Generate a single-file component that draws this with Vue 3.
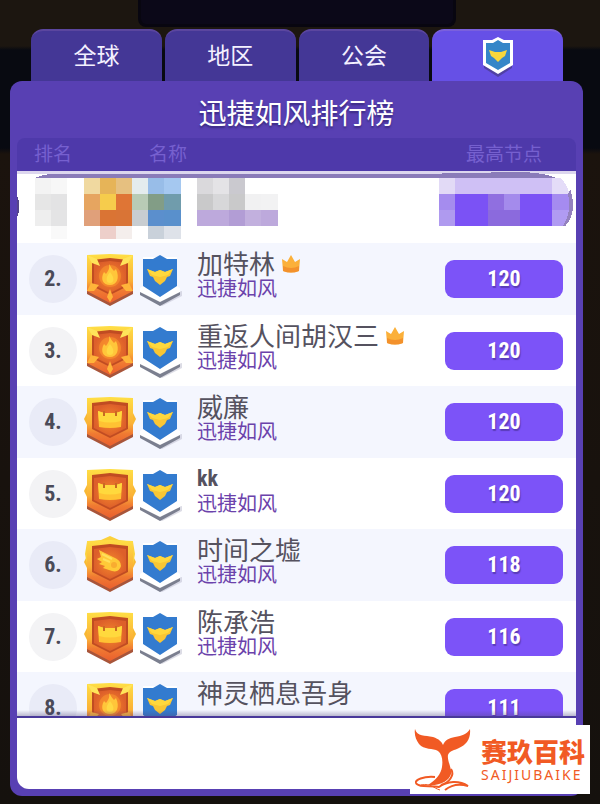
<template>
  <div class="game-page">
    <div class="back-panel"></div>
    <nav class="tabs">
      <button
        v-for="tab in tabs"
        :key="tab.key"
        type="button"
        class="tab-btn"
        :class="{ active: activeTab === tab.key }"
        :aria-label="tab.label"
        @click="activeTab = tab.key"
      >
        <span v-if="tab.key !== 'team'">{{ tab.label }}</span>
        <svg v-else viewBox="0 0 34 42" width="34" height="42">
          <path d="M3 29 V32 L17 41 L31 32 V29 L17 37 Z" fill="#4b3c92" opacity="0.8" />
          <path d="M2 4 H11 L17 1 L23 4 H32 V29 L17 38 L2 29 Z" fill="#ffffff" />
          <path d="M5 7 H12 L17 4 L22 7 H29 V27 L17 34 L5 27 Z" fill="#3586c8" />
          <path d="M8 14 L14 16 H20 L26 14 L24 20 L21 22 L17 26 L13 22 L10 20 Z" fill="#f8d63c" />
        </svg>
      </button>
    </nav>

    <main class="panel">
      <h1 class="panel-title">迅捷如风排行榜</h1>
      <div class="list">
        <table class="rank-table">
          <colgroup>
            <col class="col-rank" />
            <col class="col-badges" />
            <col />
            <col class="col-score" />
          </colgroup>
          <thead>
            <tr>
              <th class="head-rank">排名</th>
              <th></th>
              <th class="head-name"><span>名称</span></th>
              <th class="head-score">最高节点</th>
            </tr>
          </thead>
          <tbody>
            <tr class="hidden-row">
              <td colspan="4">
                <svg class="mosaic" viewBox="0 0 559 72" preserveAspectRatio="none">
                  <rect width="559" height="3" fill="#dcd6ee" />
                  <path d="M18 7 Q24 4 34 3 H400 L500 1 Q540 1 552 16 L540 7 Z" fill="#8a7bb9" />
                  <path d="M0 26 Q2 35 0 45" fill="none" stroke="#55468c" stroke-width="2" />
                  <rect
                    v-for="(block, i) in mosaic"
                    :key="i"
                    :x="block.x"
                    :y="block.y"
                    :width="block.w"
                    :height="block.h"
                    :fill="block.color"
                  />
                  <path d="M542 6 Q552 14 552 24 L555 22 Q558 42 547 55 L559 55 V6 Z" fill="#ffffff" />
                  <path d="M552 23 Q556 42 547 55 Q559 42 553 21 Z" fill="#9482be" stroke="#9482be" stroke-width="2" />
                </svg>
              </td>
            </tr>
            <tr v-for="player in players" :key="player.rank" class="player-row">
              <td>
                <span class="rank">{{ player.rank }}.</span>
              </td>
              <td>
                <div class="badges">
                  <svg viewBox="0 0 52 54" width="52" height="54">
                    <g v-if="player.badge !== 'flame'">
                      <path d="M4 16 L0 24 L4 32 Z M48 16 L52 24 L48 32 Z" fill="#f8b833" />
                      <path v-if="player.badge === 'wing'" d="M3 4 L17 2 L26 -2 L35 2 L49 4 L51 16 L48 32 L4 32 L1 16 Z" fill="#fbd13c" />
                    </g>
                    <path d="M3 38 L26 49 L49 38 V42 L26 54 L3 42 Z" fill="#a8553a" />
                    <path d="M3 3 L26 2 L49 3 V39 L26 51 L3 39 Z" fill="url(#frame)" />
                    <path d="M8 8 L26 6 L44 8 V34 L26 43 L8 34 Z" fill="#c04c22" />
                    <path d="M10 11 L26 9 L42 11 V33 L26 41 L10 33 Z" fill="url(#core)" />
                    <template v-if="player.badge === 'flame'">
                      <path d="M3 3 L13 7 L16 14 L8 11 Z M49 3 L39 7 L36 14 L44 11 Z" fill="#ffe45a" />
                      <path d="M3 39 L7 31 L15 33 L10 39 Z M49 39 L45 31 L37 33 L42 39 Z M26 37 L29 45 L26 50 L23 45 Z" fill="#ffb43a" />
                      <circle cx="26" cy="24" r="11" fill="#ff9b2d" opacity="0.5" />
                      <path d="M25 12 C27 15 28 17 30 19 L32 17 C36 26 33 33 26 33 C19 33 16 27 20 20 L22 22 C24 19 26 17 25 12 Z" fill="#ffc63a" />
                      <path d="M26 20 C31 26 30 31 26 31 C22 31 21 26 26 20 Z" fill="#ffd944" />
                    </template>
                    <template v-else-if="player.badge === 'crown'">
                      <path d="M14 16 L20 18 H32 L38 16 L37 32 Q26 34 15 32 Z" fill="#ffc233" />
                      <path d="M14 16 L20 18 H32 L38 16 L37 26 Q26 29 15 26 Z" fill="#ffd93d" />
                      <path d="M20 16 V21 M32 16 V21" stroke="#c86a22" stroke-width="2" />
                    </template>
                    <template v-else>
                      <path d="M15 12 L29 19 Q37 22 37 28 Q35 35 28 33 L19 30 L21 28 L15 26 L18 24 L13 21 L17 19 Z" fill="#ffc938" />
                      <path d="M18 16 L28 21 M19 21 L26 24" stroke="#ffe05c" stroke-width="2" />
                      <circle cx="30" cy="27" r="3" fill="#f9ac30" />
                    </template>
                  </svg>
                  <svg viewBox="0 0 44 54" width="44" height="54">
                    <path d="M10 47 L23 54 L43 44 V39 Z" fill="#b9bacb" opacity="0.5" />
                    <path d="M1 39 V43 L21 54 L41 43 V39 L21 48 Z" fill="#7b7f8f" />
                    <path d="M1 36 L4 34 V5 H38 V34 L41 36 V40 L21 50 L1 40 Z" fill="#ffffff" />
                    <path d="M4 7 H14 L21 3 L28 7 H38 V34 L21 45 L4 34 Z" fill="#337bcf" />
                    <path d="M8 17 L16 20 L21 18 L26 20 L34 17 L31 24 L28 25 L26 29 L21 33 L16 29 L14 25 L11 24 Z" fill="#f9c634" />
                    <path d="M8 17 L16 20 L21 18 L26 20 L34 17 L29 23 L21 25 L13 23 Z" fill="#ffd83d" />
                  </svg>
                </div>
              </td>
              <td>
                <div class="player">
                  <div class="player-name">
                    <span :class="{ latin: player.latin }">{{ player.name }}</span>
                    <svg v-if="player.vip" viewBox="0 0 20 20" width="20" height="20">
                      <path d="M1 5 L6 8 L10 1 L14 8 L19 5 L18 17 Q10 20 2 17 Z" fill="#fbb03a" />
                      <path d="M2 12 Q10 16 18 12 L18 17 Q10 20 2 17 Z" fill="#f3912c" />
                    </svg>
                  </div>
                  <div class="player-team">{{ player.team }}</div>
                </div>
              </td>
              <td>
                <span class="score">{{ player.score }}</span>
              </td>
            </tr>
          </tbody>
        </table>
      </div>
      <div class="panel-foot"></div>
    </main>

    <div class="brand">
      <svg viewBox="0 0 58 64" width="58" height="64">
        <path
          d="M2 1 C4 9 12 7 20 9 C26 11 29 14 30 17 C32 12 36 10 42 9 C49 8 54 6 57 1 C58 11 53 17 46 20 C42 22 36 23 35 27 C34 33 39 40 38 46 C36 53 27 58 15 57 C23 52 28 46 29 39 C30 32 29 26 25 23 C20 20 11 22 6 16 C3 12 1 7 2 1 Z"
          fill="#f15a24"
        />
        <path d="M38 41 C42 47 36 55 28 57" fill="none" stroke="#f15a24" stroke-width="2" />
        <path d="M22 49 C10 48 2 52 3 55 C5 60 18 57 26 59 C34 53 46 52 55 58 C45 55 38 57 32 62" fill="none" stroke="#f15a24" stroke-width="2" />
        <path d="M8 57 C18 55 20 60 27 62" fill="none" stroke="#f15a24" stroke-width="1" />
      </svg>
      <div class="brand-text">
        <strong>赛玖百科</strong>
        <span>SAIJIUBAIKE</span>
      </div>
    </div>

    <!-- shared badge gradients -->
    <svg class="defs" width="0" height="0" aria-hidden="true">
      <defs>
        <linearGradient id="frame" x1="0" y1="0" x2="0" y2="1">
          <stop offset="0" stop-color="#ffdf45" />
          <stop offset="0.55" stop-color="#fbb036" />
          <stop offset="0.75" stop-color="#f07a32" />
          <stop offset="1" stop-color="#ea5f2e" />
        </linearGradient>
        <radialGradient id="core">
          <stop offset="0" stop-color="#f58a2c" />
          <stop offset="1" stop-color="#dd5f2a" />
        </radialGradient>
      </defs>
    </svg>
  </div>
</template>

<script setup>
import { ref } from 'vue'

const activeTab = ref('team')

const tabs = [
  { key: 'global', label: '全球' },
  { key: 'area', label: '地区' },
  { key: 'guild', label: '公会' },
  { key: 'team', label: '迅捷如风' }
]

const players = [
  { rank: 2, name: '加特林', team: '迅捷如风', badge: 'flame', score: 120, vip: true },
  { rank: 3, name: '重返人间胡汉三', team: '迅捷如风', badge: 'flame', score: 120, vip: true },
  { rank: 4, name: '威廉', team: '迅捷如风', badge: 'crown', score: 120 },
  { rank: 5, name: 'kk', team: '迅捷如风', badge: 'crown', score: 120, latin: true },
  { rank: 6, name: '时间之墟', team: '迅捷如风', badge: 'wing', score: 118 },
  { rank: 7, name: '陈承浩', team: '迅捷如风', badge: 'crown', score: 116 },
  { rank: 8, name: '神灵栖息吾身', team: '', badge: 'flame', score: 111 }
]

// masked first place: column index -> colour, one object per line of blocks
const cell = 16.17
const tops = [7, 23, 39, 55, 68]
const blocks = [
  {
    0: '#f3f3f3', 1: '#f7f7f7', 3: '#f0d9a0', 4: '#e6b458', 5: '#e6c080', 6: '#e4ecee', 7: '#98bde8', 8: '#a5c8f0',
    10: '#dad9dc', 11: '#e4e3e6', 12: '#cac9cf',
    25: '#e2daf6', 26: '#cfc0f5', 27: '#cfc0f5', 28: '#cfc0f5', 29: '#cfc0f5', 30: '#cfc0f5', 31: '#cfc0f5', 32: '#e4dcf8'
  },
  {
    0: '#e6e6e6', 1: '#e3e3e4', 3: '#e6a560', 4: '#f6cc4c', 5: '#df7535', 6: '#b8cbb5', 7: '#829d86', 8: '#709cac',
    10: '#c9c9ca', 11: '#d7d7d9', 12: '#c9c9ca', 13: '#f1f1f2', 14: '#f2f2f3',
    25: '#a58cee', 26: '#7b52f5', 27: '#7b52f5', 28: '#906fe0', 29: '#a48bec', 30: '#7b52f5', 31: '#7b52f5', 32: '#a58bf0'
  },
  {
    0: '#eeeeee', 1: '#e4e4e5', 3: '#e0a07a', 4: '#da7434', 5: '#d97436', 6: '#c8cdd1', 7: '#5b8fcd', 8: '#5990cc',
    10: '#bda9dc', 11: '#bda9dc', 12: '#b29dd5', 13: '#c2b0de', 14: '#bda9dc',
    25: '#af9aef', 26: '#7b52f5', 27: '#7b52f5', 28: '#8b6add', 29: '#8b6add', 30: '#7b52f5', 31: '#7b52f5', 32: '#b09bf2'
  },
  { 1: '#f9f9f9', 4: '#edcfca', 5: '#f4eeec', 7: '#c9d1da', 8: '#dee2e9' }
]

const mosaic = blocks.flatMap((line, row) =>
  Object.entries(line).map(([col, color]) => ({
    x: 18 + col * cell,
    y: tops[row],
    w: cell,
    h: tops[row + 1] - tops[row],
    color
  }))
)
</script>

<style>
body {
  margin: 0;
  background: #15110d;
}
</style>

<style scoped>
.game-page {
  position: relative;
  box-sizing: border-box;
  height: 100vh;
  padding: 29px 17px 8px 10px;
  display: flex;
  flex-direction: column;
  overflow: hidden;
  font-family: "Noto Sans", "Noto Sans CJK SC", sans-serif;
  background: linear-gradient(#1c1610 0, #1c1610 46px, #080a11 50px, #080a11 148px, #1b130d 154px, #15110d 100%);
}

.back-panel {
  position: absolute;
  top: 0;
  left: 23%;
  right: 24%;
  height: 24px;
  background: #0b0818;
  border: 3px solid #080610;
  border-top: none;
  border-radius: 0 0 8px 8px;
}

.tabs {
  position: relative;
  display: grid;
  grid-template-columns: repeat(4, 1fr);
  gap: 3px;
  padding: 0 20px 0 21px;
}

.tab-btn {
  height: 52px;
  padding: 0 0 4px;
  border: none;
  border-top: 2px solid #5b469f;
  border-radius: 12px 12px 0 0;
  background: #443796;
  color: #f4f1ff;
  font-family: inherit;
  font-size: 23px;
  cursor: pointer;
  display: flex;
  align-items: center;
  justify-content: center;
}

.tab-btn.active {
  background: #6650e6;
  border-top-color: #7a60dc;
}

.tab-btn svg {
  margin-top: 6px;
}

.panel {
  position: relative;
  flex: 1;
  min-height: 0;
  box-sizing: border-box;
  display: flex;
  flex-direction: column;
  padding: 0 7px 7px;
  border-radius: 12px;
  background: #5840b3;
}

.panel-title {
  margin: 0;
  height: 57px;
  line-height: 64px;
  text-align: center;
  font-size: 28px;
  font-weight: 400;
  color: #ffffff;
  text-shadow: 0 2px 2px #3a2a80;
}

.list {
  position: relative;
  flex: 1;
  min-height: 0;
  overflow: hidden;
  border-bottom: 2px solid #49399a;
  border-radius: 8px 8px 0 0;
}

.list::after {
  content: '';
  position: absolute;
  left: 0;
  right: 0;
  bottom: 0;
  height: 6px;
  background: linear-gradient(rgba(80, 70, 120, 0), rgba(80, 70, 120, 0.35));
}

.rank-table {
  width: 100%;
  table-layout: fixed;
  border-collapse: collapse;
}

.col-rank {
  width: 67px;
}

.col-badges {
  width: 113px;
}

.col-score {
  width: 131px;
}

th {
  height: 33px;
  padding: 0;
  background: #4e39aa;
  color: #7660cf;
  font-size: 19px;
  line-height: 33px;
  font-weight: 400;
  text-align: left;
}

.head-rank {
  padding-left: 17px;
}

.head-name span {
  margin-left: -48px;
}

.head-score {
  padding-left: 21px;
}

td {
  padding: 0;
}

.hidden-row {
  background: #ffffff;
}

.mosaic {
  display: block;
  width: 100%;
  height: 72px;
  shape-rendering: crispEdges;
}

.player-row {
  height: 71px;
  background: #ffffff;
}

.player-row:nth-child(even) {
  height: 72px;
  background: #f4f6fe;
}

.rank {
  display: block;
  width: 48px;
  margin-left: 12px;
  border-radius: 50%;
  background: #f3f3f5;
  color: #4a4a58;
  font-family: "Roboto Condensed", "Open Sans", sans-serif;
  font-size: 22px;
  line-height: 48px;
  font-weight: 700;
  text-align: center;
}

.player-row:nth-child(even) .rank {
  background: #e9ebf7;
}

.badges {
  display: flex;
  gap: 3px;
}

.badges svg {
  overflow: visible;
}

.player {
  padding-bottom: 6px;
}

.player-name {
  display: flex;
  align-items: center;
  gap: 6px;
  height: 26px;
  line-height: 26px;
  font-size: 26px;
  color: #55525f;
  white-space: nowrap;
}

.player-name .latin {
  font-family: "Roboto Condensed", "Open Sans", sans-serif;
  font-size: 22px;
  font-weight: 700;
}

.player-team {
  height: 24px;
  font-size: 20px;
  line-height: 24px;
  color: #6b42ab;
}

.score {
  display: block;
  width: 118px;
  border-radius: 9px;
  background: #7c53f8;
  color: #ffffff;
  font-family: "Roboto Condensed", "Open Sans", sans-serif;
  font-size: 22px;
  line-height: 38px;
  font-weight: 700;
  text-align: center;
  text-shadow: 1px 2px 1px #5a3cb8;
}

.panel-foot {
  height: 71px;
  background: #ffffff;
  border-radius: 0 0 12px 12px;
}

.brand {
  position: absolute;
  right: 10px;
  bottom: 10px;
  box-sizing: border-box;
  width: 180px;
  height: 69px;
  padding: 0 3px;
  display: flex;
  align-items: center;
  gap: 10px;
  background: #ffffff;
  color: #f15a24;
}

.brand-text {
  display: flex;
  flex-direction: column;
}

.brand-text strong {
  font-family: "Noto Sans CJK SC", sans-serif;
  font-size: 26px;
  line-height: 30px;
  font-weight: 900;
}

.brand-text span {
  font-size: 14px;
  line-height: 18px;
  letter-spacing: 2px;
}

.defs {
  position: absolute;
}
</style>
